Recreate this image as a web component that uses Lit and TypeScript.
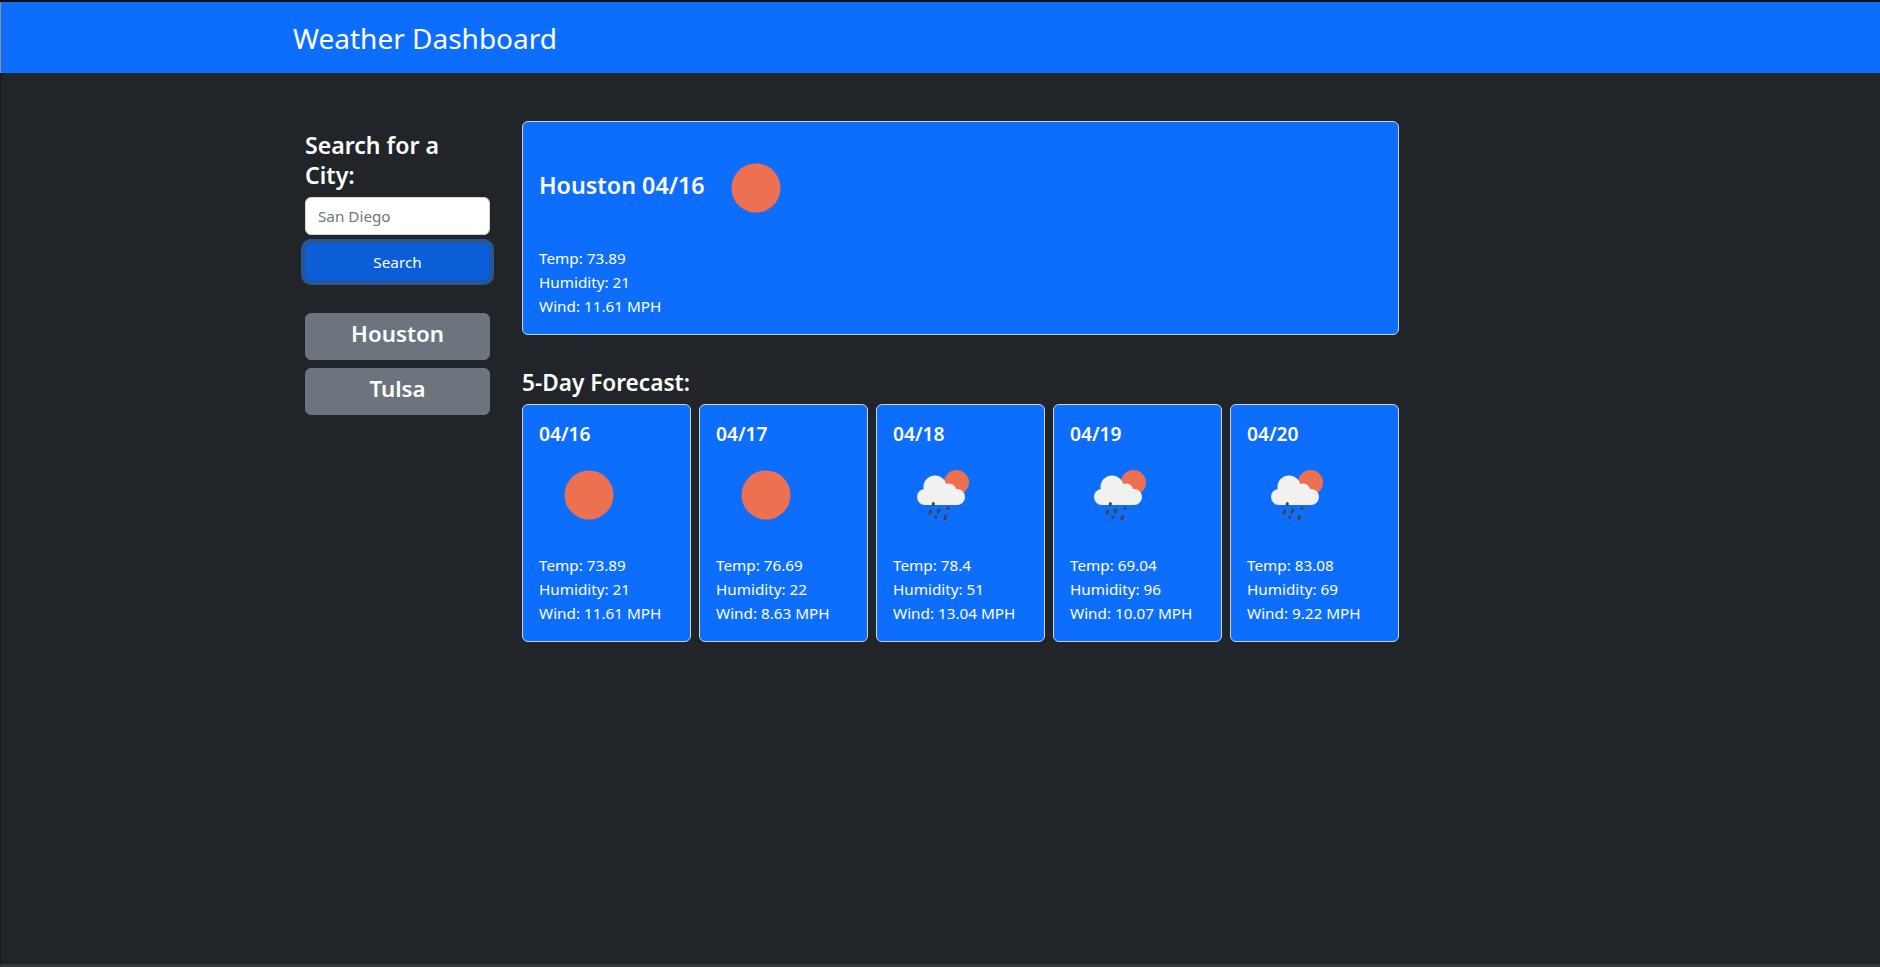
import { LitElement, html, css, svg } from 'lit';
import { customElement } from 'lit/decorators.js';

type Day = { date: string; icon: 'sun' | 'rain'; temp: string; humidity: string; wind: string };

const DAYS: Day[] = [
  { date: '04/16', icon: 'sun', temp: '73.89', humidity: '21', wind: '11.61' },
  { date: '04/17', icon: 'sun', temp: '76.69', humidity: '22', wind: '8.63' },
  { date: '04/18', icon: 'rain', temp: '78.4', humidity: '51', wind: '13.04' },
  { date: '04/19', icon: 'rain', temp: '69.04', humidity: '96', wind: '10.07' },
  { date: '04/20', icon: 'rain', temp: '83.08', humidity: '69', wind: '9.22' },
];

// same 100x100 box as the weather service icons
const sun = svg`<circle cx="50" cy="50" r="24.5" fill="#ed7050"></circle>`;
const rain = svg`
  <circle cx="63.5" cy="37.5" r="12.5" fill="#ed7050"></circle>
  <g fill="#f1f1f1">
    <circle cx="42" cy="42" r="11.5"></circle>
    <circle cx="56" cy="46" r="7.5"></circle>
    <circle cx="32" cy="52" r="8"></circle>
    <circle cx="64" cy="52" r="8"></circle>
    <rect x="32" y="48" width="32" height="12"></rect>
  </g>
  <g stroke="#444" stroke-width="3" stroke-linecap="round">
    <path d="M40.4 58.600l-.2 .8"></path>
    <path d="M37.600 66l-.7 2.200"></path>
    <path d="M45.800 65l-.7 2.200"></path>
    <path d="M55 63l-.2 .5"></path>
    <path d="M43 72l-.2 .4"></path>
    <path d="M52.600 71.500l-.7 2.200"></path>
  </g>`;

function icon(name: Day['icon']) {
  return html`<svg class="icon" viewBox="0 0 100 100" width="100" height="100">${name === 'sun' ? sun : rain}</svg>`;
}

@customElement('app-root')
export class AppRoot extends LitElement {
  static styles = css`
    :host {
      display: block;
      box-sizing: border-box;
      height: 967px;
      background: #212529;
      border-top: 2px solid #0c0e10;
      border-bottom: 3px solid #33363a;
      color: #fff;
      font-family: 'Noto Sans', 'Open Sans', sans-serif;
      font-size: 15.25px;
      line-height: 24px;
      overflow: hidden;
    }
    * {
      box-sizing: border-box;
    }
    .navbar {
      height: 71px;
      background: #0d6efd;
      border-left: 1px solid #8f9193;
      padding-left: 292px;
      display: flex;
      align-items: center;
    }
    .brand {
      margin: 0;
      font-size: 28px;
      font-weight: 400;
      line-height: 34px;
    }
    .content {
      display: flex;
      gap: 32px;
      border-left: 1px solid #16181b;
      height: calc(100% - 71px);
      padding: 48px 0 0 304px;
    }
    .side {
      width: 185px;
      padding-top: 9px;
    }
    h4 {
      margin: 0 0 7px;
      font-size: 23.1px;
      font-weight: 600;
      line-height: 30px;
    }
    .side input {
      display: block;
      width: 100%;
      height: 38px;
      padding: 6px 12px;
      border: 1px solid #ced4da;
      border-radius: 6px;
      background: #fff;
      font: inherit;
    }
    .side input::placeholder {
      color: #6c757d;
    }
    .search {
      display: block;
      width: 100%;
      height: 38px;
      margin-top: 8px;
      border: 1px solid #0a58ca;
      border-radius: 6px;
      background: #0b5ed7;
      color: #fff;
      font: inherit;
      box-shadow: 0 0 0 4px #2a5595;
    }
    .cities {
      margin-top: 32px;
      display: flex;
      flex-direction: column;
      gap: 8px;
    }
    .city {
      height: 47px;
      border: 1px solid #6c757d;
      border-radius: 6px;
      background: #6c757d;
      color: #fff;
      font-family: inherit;
      font-size: 22.3px;
      font-weight: 600;
      line-height: 29px;
      padding: 0 0 7px;
    }
    .main {
      width: 877px;
    }
    .card {
      background: #0d6efd;
      border: 1px solid #cfd3d7;
      border-radius: 6px;
      padding: 16px;
    }
    .head {
      display: flex;
      align-items: center;
    }
    .head h3 {
      margin: 0 0 6px;
      font-size: 23.3px;
      font-weight: 600;
      line-height: 29px;
      width: 167px;
      white-space: nowrap;
    }
    .icon {
      display: block;
    }
    .stats {
      margin-top: 8px;
    }
    .stats div {
      height: 24px;
      white-space: nowrap;
    }
    .forecast {
      margin: 33px 0 7px;
      font-size: 22.6px;
      line-height: 29px;
    }
    .days {
      display: grid;
      grid-template-columns: repeat(5, 1fr);
      gap: 8px;
    }
    .days h5 {
      margin: 0;
      padding-top: 1px;
      height: 24px;
      font-size: 19.2px;
      font-weight: 600;
      line-height: 24px;
    }
    .days .stats {
      margin-top: 8px;
    }
  `;

  private stats(d: Day) {
    return html`<div class="stats">
      <div>Temp: ${d.temp}</div>
      <div>Humidity: ${d.humidity}</div>
      <div>Wind: ${d.wind} MPH</div>
    </div>`;
  }

  render() {
    return html`
      <nav class="navbar"><h1 class="brand">Weather Dashboard</h1></nav>
      <div class="content">
        <aside class="side">
          <h4>Search for a City:</h4>
          <input type="text" placeholder="San Diego" />
          <button class="search">Search</button>
          <div class="cities">
            <button class="city">Houston</button>
            <button class="city">Tulsa</button>
          </div>
        </aside>
        <main class="main">
          <section class="card">
            <div class="head">
              <h3>Houston 04/16</h3>
              ${icon('sun')}
            </div>
            ${this.stats(DAYS[0])}
          </section>
          <h4 class="forecast">5-Day Forecast:</h4>
          <div class="days">
            ${DAYS.map(
              (d) => html`<article class="card">
                <h5>${d.date}</h5>
                ${icon(d.icon)} ${this.stats(d)}
              </article>`
            )}
          </div>
        </main>
      </div>
    `;
  }
}
